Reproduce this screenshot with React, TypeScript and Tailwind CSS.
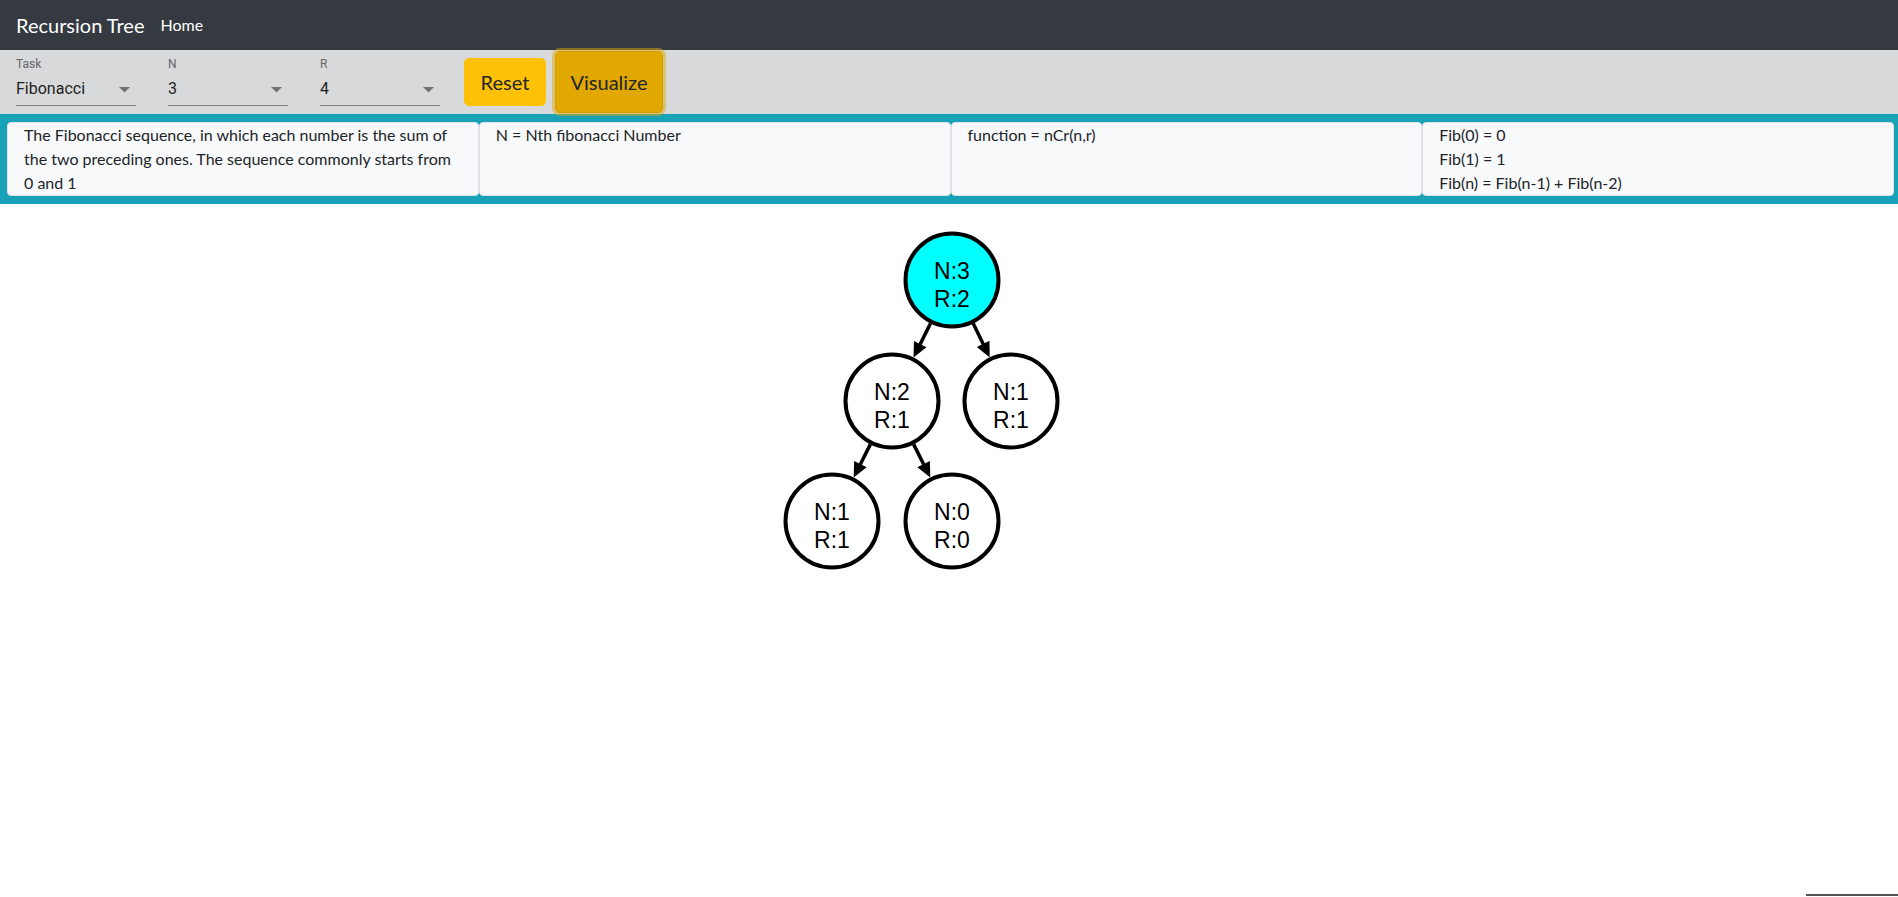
import React from "react";

type Node = { id: number; x: number; y: number; n: number; r: number; root?: boolean };

const NODES: Node[] = [
  { id: 0, x: 203, y: 76, n: 3, r: 2, root: true },
  { id: 1, x: 143, y: 197, n: 2, r: 1 },
  { id: 2, x: 262, y: 197, n: 1, r: 1 },
  { id: 3, x: 83, y: 317, n: 1, r: 1 },
  { id: 4, x: 203, y: 317, n: 0, r: 0 },
];
const EDGES: [number, number][] = [
  [0, 1],
  [0, 2],
  [1, 3],
  [1, 4],
];

const R = 46.5;
const OUT = 48.5;

function Edge({ a, b }: { a: Node; b: Node }) {
  const dx = b.x - a.x;
  const dy = b.y - a.y;
  const len = Math.sqrt(dx * dx + dy * dy);
  const ux = dx / len;
  const uy = dy / len;
  const sx = a.x + ux * OUT;
  const sy = a.y + uy * OUT;
  const tx = b.x - ux * OUT;
  const ty = b.y - uy * OUT;
  const hl = 15;
  const hw = 7;
  const bx = tx - ux * hl;
  const by = ty - uy * hl;
  const px = -uy;
  const py = ux;
  const pts = `${tx},${ty} ${bx + px * hw},${by + py * hw} ${bx - px * hw},${by - py * hw}`;
  return (
    <g>
      <line x1={sx} y1={sy} x2={bx + ux * 2} y2={by + uy * 2} stroke="#000" strokeWidth={3.5} />
      <polygon points={pts} fill="#000" />
    </g>
  );
}

function Select({ label, value }: { label: string; value: string }) {
  return (
    <div className="mx-4 flex w-[120px] flex-col">
      <div className="h-[12px] font-['Roboto',sans-serif] text-[12px] leading-[12px] text-[#666768]">{label}</div>
      <div className="relative mt-[4px] flex h-[32px] items-center border-b border-[#7f8081] pb-[2px] font-['Roboto',sans-serif] text-[16px] text-[#1f1f1f]">
        <span>{value}</span>
        <svg className="absolute right-[6px] top-[13px]" width="11" height="6" viewBox="0 0 11 6">
          <polygon points="0,0 11,0 5.5,5.5" fill="#717273" />
        </svg>
      </div>
    </div>
  );
}

export default function App() {
  return (
    <div className="relative min-h-[897px] bg-white font-['Lato',sans-serif] text-[#212529]">
      <nav className="flex h-[50px] items-center bg-[#343a40] px-4">
        <span className="text-[20px] text-white">Recursion Tree</span>
        <span className="ml-[16px] text-[16px] text-white">Home</span>
      </nav>

      <div className="flex h-[64px] items-center bg-[#d8d9db]">
        <Select label="Task" value="Fibonacci" />
        <Select label="N" value="3" />
        <Select label="R" value="4" />
        <button className="ml-2 flex h-[48px] w-[82px] items-center justify-center rounded-[5px] border border-[#ffc107] bg-[#ffc107] text-[20px] text-[#212529]">
          Reset
        </button>
        <button className="ml-[9px] flex h-[62px] w-[108px] items-center justify-center rounded-[5px] border border-[#d39e00] bg-[#e0a800] text-[20px] text-[#212529] shadow-[0_0_0_3px_rgba(222,170,12,0.5)]">
          Visualize
        </button>
      </div>

      <div className="grid grid-cols-4 bg-[#17a2b8] py-2 pl-[7px] pr-[4px]">
        <div className="h-[74px] rounded-[4px] border border-[#dee2e6] bg-[#f8f9fa] px-4 text-[16px] leading-[24px]">
          The Fibonacci sequence, in which each number is the sum of
          <br />
          the two preceding ones. The sequence commonly starts from
          <br />0 and 1
        </div>
        <div className="h-[74px] rounded-[4px] border border-[#dee2e6] bg-[#f8f9fa] px-4 text-[16px] leading-[24px]">
          N = Nth fibonacci Number
        </div>
        <div className="h-[74px] rounded-[4px] border border-[#dee2e6] bg-[#f8f9fa] px-4 text-[16px] leading-[24px]">
          function = nCr(n,r)
        </div>
        <div className="h-[74px] rounded-[4px] border border-[#dee2e6] bg-[#f8f9fa] px-4 text-[16px] leading-[24px]">
          <div>Fib(0) = 0</div>
          <div>Fib(1) = 1</div>
          <div>Fib(n) = Fib(n-1) + Fib(n-2)</div>
        </div>
      </div>

      <div className="flex justify-center">
        <svg width="400" height="380" viewBox="0 0 400 380">
          {EDGES.map(([a, b]) => (
            <Edge key={`${a}-${b}`} a={NODES[a]} b={NODES[b]} />
          ))}
          {NODES.map((n) => (
            <g key={n.id}>
              <circle cx={n.x} cy={n.y} r={R} fill={n.root ? "#00ffff" : "#ffffff"} stroke="#000" strokeWidth={4} />
              <text
                x={n.x}
                y={n.y - 1}
                textAnchor="middle"
                fontFamily="'Liberation Sans', Arial, sans-serif"
                fontSize="23"
                fill="#000"
              >
                N:{n.n}
              </text>
              <text
                x={n.x}
                y={n.y + 27}
                textAnchor="middle"
                fontFamily="'Liberation Sans', Arial, sans-serif"
                fontSize="23"
                fill="#000"
              >
                R:{n.r}
              </text>
            </g>
          ))}
        </svg>
      </div>

      <div className="absolute bottom-[1px] right-0 h-[2px] w-[92px] bg-[#555]" />
    </div>
  );
}
